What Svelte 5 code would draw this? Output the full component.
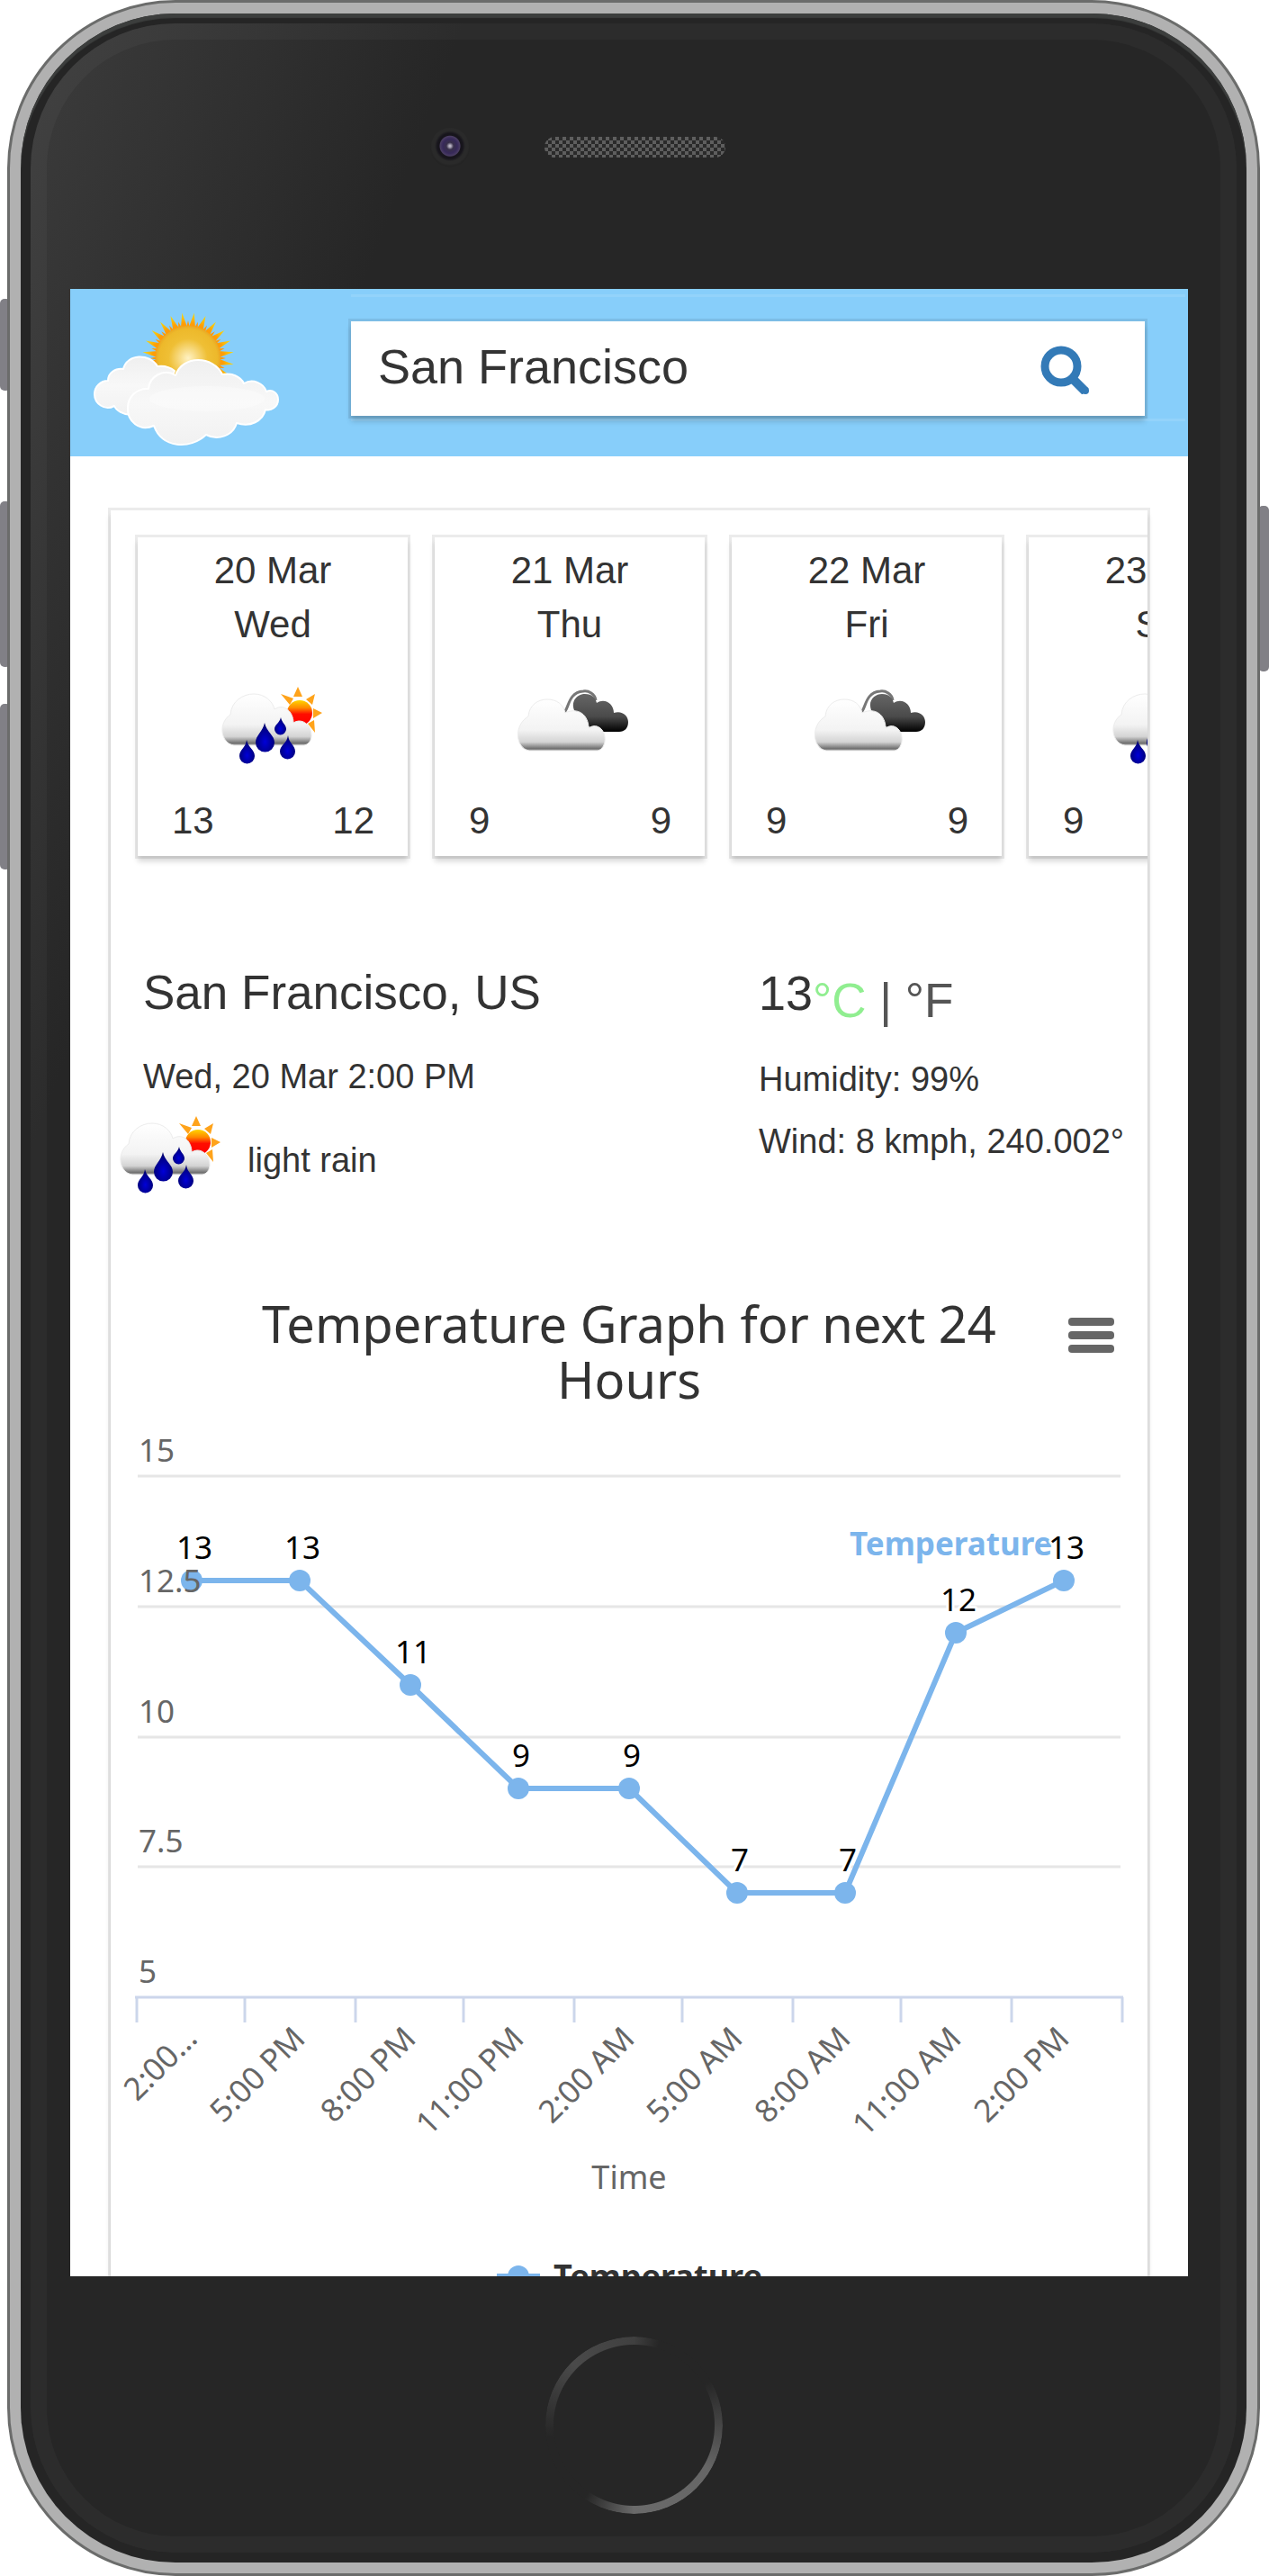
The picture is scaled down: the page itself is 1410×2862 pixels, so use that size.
<script>
  const days = [
    { date: '20 Mar', day: 'Wed', icon: 'rain', high: 13, low: 12 },
    { date: '21 Mar', day: 'Thu', icon: 'clouds', high: 9, low: 9 },
    { date: '22 Mar', day: 'Fri', icon: 'clouds', high: 9, low: 9 },
    { date: '23 Mar', day: 'Sat', icon: 'rain', high: 9, low: 9 }
  ];

  const readings = [
    { time: '2:00…', value: 13 },
    { time: '5:00 PM', value: 13 },
    { time: '8:00 PM', value: 11 },
    { time: '11:00 PM', value: 9 },
    { time: '2:00 AM', value: 9 },
    { time: '5:00 AM', value: 7 },
    { time: '8:00 AM', value: 7 },
    { time: '11:00 AM', value: 12 },
    { time: '2:00 PM', value: 13 }
  ];

  const plot = { left: 29, right: 1124, top: 77, bottom: 656 };
  const step = (plot.right - plot.left) / readings.length;
  // Points and ticks snap to the chart's 3px grid
  const snap = (n) => 3 * Math.floor(n / 3);
  const px = (i) => snap(91 + 121.3 * i);
  const py = (v) => Math.round(plot.bottom - ((v - 5) / 10) * (plot.bottom - plot.top));
  const gridValues = [15, 12.5, 10, 7.5, 5];
  const line = readings.map((r, i) => `${px(i)},${py(r.value)}`).join(' ');
  const ticks = Array.from({ length: readings.length + 1 }, (_, i) => plot.left + snap(step * i));

  // Sun rays of the logo: long yellow spikes with short orange ones between them
  const ray = (angle, half, r0, r1) => {
    const at = (a, r) => `${(109 + r * Math.sin(a)).toFixed(1)},${(58 - r * Math.cos(a)).toFixed(1)}`;
    return `${at(angle - half, r0)} ${at(angle, r1)} ${at(angle + half, r0)}`;
  };
  const longRays = Array.from({ length: 24 }, (_, i) => ray(((i + 0.5) * Math.PI) / 12, 0.11, 34, 51));
  const shortRays = Array.from({ length: 48 }, (_, i) => ray((i * Math.PI) / 24, 0.07, 33, 42));

  let city = 'San Francisco';
</script>

{#snippet weatherIcon(kind, label)}
  <svg class="weather" viewBox="9 36 132 92" role="img" aria-label={label}>
    <defs>
      <linearGradient id="cloud" x1="0" y1="0" x2="0" y2="1">
        <stop offset="0" stop-color="#ffffff" />
        <stop offset="0.6" stop-color="#f3f3f3" />
        <stop offset="0.83" stop-color="#d4d4d4" />
        <stop offset="0.96" stop-color="#707070" />
        <stop offset="1" stop-color="#a8a8a8" />
      </linearGradient>
      <linearGradient id="dark" x1="0" y1="0" x2="0" y2="1">
        <stop offset="0" stop-color="#666" />
        <stop offset="0.6" stop-color="#4a4a4a" />
        <stop offset="1" stop-color="#000" />
      </linearGradient>
      <linearGradient id="sunball" x1="0" y1="0" x2="0" y2="1">
        <stop offset="0" stop-color="#ffd500" />
        <stop offset="0.3" stop-color="#ff8a00" />
        <stop offset="0.55" stop-color="#ff0d00" />
        <stop offset="1" stop-color="#ff0000" />
      </linearGradient>
      <radialGradient id="drop" cx="0.5" cy="0.65" r="0.6">
        <stop offset="0" stop-color="#0000d8" />
        <stop offset="1" stop-color="#00006a" />
      </radialGradient>
    </defs>
    {#if kind === 'rain'}
      <g fill="#ffa31a">
        <path d="M98 51 L103 40 L108 51 Z M112 54 L122 48 L119 60 Z M120 64 L130 69 L120 75 Z M114 81 L122 91 L121 77 Z M94 60 L84 48 L98 53 Z" />
      </g>
      <circle cx="105" cy="69" r="14" fill="url(#sunball)" />
      <path d="M32 105 C17 103 14 80 28 71 C29 56 42 48 54 48 C66 48 75 56 77 65 C88 58 98 68 98 80 C106 75 114 80 117 88 C120 97 116 104 110 105 Z" fill="url(#cloud)" stroke="#ececec" stroke-width="1" />
      <g fill="url(#drop)">
        <path d="M66 80 C68 90 77 94 77 102 A10 10 0 0 1 56 102 C56 94 64 90 66 80 Z" />
        <path d="M84 74 C85 80 90 82 90 87 A6 6 0 0 1 77 87 C77 82 83 80 84 74 Z" />
        <path d="M92 94 C93 103 100 105 100 112 A8 8 0 0 1 83 112 C83 105 91 103 92 94 Z" />
        <path d="M46 99 C48 108 55 110 55 117 A8 8 0 0 1 38 117 C38 110 45 108 46 99 Z" />
      </g>
    {:else}
      <path d="M69 68 C74 65 73 46 90 45 C96 44 103 48 104 55" fill="none" stroke="#777" stroke-width="3" />
      <path d="M80 66 C76 55 84 48 92 48 C100 48 104 53 105 58 C114 52 124 59 124 69 C133 66 140 72 140 79 C140 86 136 90 130 90 H108 C98 90 92 78 80 66 Z" fill="url(#dark)" />
      <path d="M30 111 C14 108 13 82 29 73 C30 60 40 54 50 54 C61 54 68 60 70 69 C85 62 96 72 96 86 C104 80 113 86 114 96 C115 104 111 110 106 111 Z" fill="url(#cloud)" stroke="#ececec" stroke-width="1" />
    {/if}
  </svg>
{/snippet}

<div class="stage">
  <span class="key mute"></span>
  <span class="key up"></span>
  <span class="key down"></span>
  <span class="key power"></span>
  <div class="frame">
    <div class="rim">
      <div class="face">
        <div class="bezel">
          <span class="camera"></span>
          <span class="speaker"></span>
        </div>

        <div class="screen">
          <header>
            <svg class="logo" viewBox="0 0 215 160" role="img" aria-label="Weather">
              <defs>
                <radialGradient id="disc">
                  <stop offset="0" stop-color="#fff2c4" />
                  <stop offset="0.6" stop-color="#efbf35" />
                  <stop offset="0.9" stop-color="#edb92b" />
                  <stop offset="1" stop-color="#e9a825" />
                </radialGradient>
                <radialGradient id="spike" gradientUnits="userSpaceOnUse" cx="109" cy="58" r="51">
                  <stop offset="0.75" stop-color="#ff9f05" />
                  <stop offset="1" stop-color="#f5dc10" />
                </radialGradient>
                <linearGradient id="puff" x1="0" y1="0" x2="0" y2="1">
                  <stop offset="0" stop-color="#efefef" />
                  <stop offset="0.5" stop-color="#f8f8f8" />
                  <stop offset="1" stop-color="#f1f1f1" />
                </linearGradient>
              </defs>
              {#each longRays as points}
                <polygon {points} fill="url(#spike)" />
              {/each}
              {#each shortRays as points}
                <polygon {points} fill="#ff9a0a" />
              {/each}
              <circle cx="109" cy="58" r="36" fill="url(#disc)" />
              <g fill="url(#puff)" stroke="#fff" stroke-width="2" stroke-linejoin="round">
                <path d="M27 111 C16 117 5 108 5 98 C5 89 12 83 20 83 C20 74 28 69 37 70 C41 53 66 52 75 67 C82 66 89 68 94 72 L80 110 L46 121 C37 121 29 116 27 111 Z" />
                <path d="M71 133 C55 140 41 128 42 113 C42 100 53 91 65 92 C66 78 82 69 95 77 C103 54 137 55 147 76 C157 74 167 78 171 86 C181 80 193 86 196 95 C203 92 209 97 209 104 C209 112 201 117 195 115 C192 128 178 135 163 130 C159 144 142 150 129 143 C111 160 80 158 71 133 Z" />
              </g>
              <ellipse cx="130" cy="103" rx="64" ry="14" fill="#fff" opacity="0.3" />
            </svg>
            <div class="nav">
              <form class="search" on:submit|preventDefault>
                <input type="text" aria-label="City" bind:value={city} />
                <button type="submit" aria-label="Search">
                  <svg viewBox="0 0 56 56" width="56" height="56">
                    <circle cx="23" cy="25" r="18" fill="none" stroke="#337ab7" stroke-width="9" />
                    <path d="M36 39 L50 53" stroke="#337ab7" stroke-width="10" />
                    <circle cx="50" cy="52" r="4" fill="#337ab7" />
                  </svg>
                </button>
              </form>
            </div>
          </header>

          <main>
            <section class="forecast">
              {#each days as d}
                <article>
                  <p>{d.date}</p>
                  <p>{d.day}</p>
                  {@render weatherIcon(d.icon, d.icon)}
                  <div class="range"><span>{d.high}</span><span>{d.low}</span></div>
                </article>
              {/each}
            </section>

            <section class="current">
              <div>
                <h1>San Francisco, US</h1>
                <p class="when">Wed, 20 Mar 2:00 PM</p>
                <div class="sky">
                  {@render weatherIcon('rain', 'light rain')}
                  <span>light rain</span>
                </div>
              </div>
              <div>
                <div class="temp">
                  <span class="value">13</span>
                  <div class="units">
                    <button type="button" class="on">°C</button>&nbsp;|&nbsp;<button type="button">°F</button>
                  </div>
                </div>
                <p class="humidity">Humidity: 99%</p>
                <p class="wind">Wind: 8 kmph, 240.002°</p>
              </div>
            </section>

            <section class="chart">
              <div class="chart-head">
                <h2>Temperature Graph for next 24 Hours</h2>
                <button type="button" aria-label="Chart menu"><i></i><i></i><i></i></button>
              </div>
              <svg class="plot" viewBox="0 0 1152 1000" role="img" aria-label="Temperature for the next 24 hours">
                {#each gridValues.slice(0, 4) as v}
                  <line x1="30" x2="1122" y1={py(v)} y2={py(v)} stroke="#e6e6e6" stroke-width="3" />
                {/each}
                <line x1="27" x2="1125" y1={plot.bottom} y2={plot.bottom} stroke="#ccd6eb" stroke-width="3" />
                {#each ticks as x}
                  <line x1={x} x2={x} y1={plot.bottom} y2={plot.bottom + 28} stroke="#ccd6eb" stroke-width="3" />
                {/each}
                <polyline points={line} fill="none" stroke="#7cb5ec" stroke-width="6" stroke-linejoin="round" />
                {#each readings as r, i}
                  <circle cx={px(i)} cy={py(r.value)} r="12" fill="#7cb5ec" />
                {/each}
                <text class="series" x="821" y="165">Temperature</text>
                {#each readings as r, i}
                  <text class="point" x={px(i) + 3} y={py(r.value) - 24}>{r.value}</text>
                {/each}
                {#each gridValues as v}
                  <text class="axis" x="31" y={py(v) - 16}>{v}</text>
                {/each}
                {#each readings as r, i}
                  <text class="axis time" transform={`translate(${px(i) + 8} 704) rotate(-45)`}>{r.time}</text>
                {/each}
                <text class="name" x="576" y="869">Time</text>
                <line x1="429" x2="477" y1="966" y2="966" stroke="#7cb5ec" stroke-width="6" />
                <circle cx="453" cy="966" r="12" fill="#7cb5ec" />
                <text class="legend" x="492" y="979">Temperature</text>
              </svg>
            </section>
          </main>
        </div>

        <div class="chin">
          <button class="home" type="button" aria-label="Home"></button>
        </div>
      </div>
    </div>
  </div>
</div>

<style>
  :global(body) {
    background: #fff;
  }
  .stage, .stage * {
    box-sizing: border-box;
  }
  .stage {
    position: relative;
    height: 100vh;
    padding: 0 10px 0 8px;
    font-family: "Liberation Sans", Arial, sans-serif;
    color: #333;
  }
  p, h1, h2 {
    margin: 0;
    font-weight: 400;
  }
  button {
    border: 0;
    padding: 0;
    background: none;
    font: inherit;
    color: inherit;
    cursor: pointer;
  }
  .key {
    position: absolute;
    left: 0;
    width: 12px;
    height: 184px;
    border-radius: 5px;
    background: #818086;
  }
  .mute { top: 332px; height: 102px; }
  .up { top: 557px; }
  .down { top: 782px; }
  .power { top: 562px; left: auto; right: 0; }

  .frame {
    position: relative;
    height: 100%;
    border: 3px solid #6b6c6b;
    border-radius: 187px;
    background: #b1b1b1;
    padding: 12px;
  }
  .rim {
    height: 100%;
    padding: 11px;
    border-radius: 172px;
    background: #252525;
    box-shadow: inset 0 5px 1px #3c3e3d;
  }
  .face {
    display: grid;
    grid-template-rows: 295px minmax(0, 1fr) 307px;
    height: 100%;
    padding: 0 54px 0 44px;
    border-radius: 161px;
    background: linear-gradient(111deg, #3c3c3c 0, #262626 450px);
    box-shadow: inset 0 0 0 18px rgba(255, 255, 255, 0.03);
  }
  .bezel {
    display: grid;
    grid-template-columns: 1fr 201px 1fr;
    column-gap: 83px;
    align-items: center;
    padding: 0 0 20px 12px;
  }
  .camera {
    justify-self: end;
    width: 44px;
    height: 44px;
    border-radius: 50%;
    background: radial-gradient(circle at 50% 46%, #b9b4c4 0 1px, #38304a 4px, #37295a 8px, #4a3d62 11px, #17151c 12px 14px, #2a2a2a 17px 20px, #242424 22px);
  }
  .speaker {
    height: 23px;
    border-radius: 12px;
    background: repeating-conic-gradient(#5e5e5e 0 25%, #2a2a2a 0 50%) 0 0 / 8px 8px;
  }
  .screen {
    overflow: hidden;
    background: #fff;
  }
  .chin {
    display: flex;
    align-items: center;
    justify-content: center;
    padding: 24px 0 0 10px;
  }
  .home {
    width: 197px;
    height: 197px;
    border-radius: 50%;
    background: conic-gradient(#404040 0, #262626 17deg, #262626 60deg, #666 120deg, #6a6a6a 180deg, #262626 214deg, #262626 262deg, #4a4a4a 315deg, #404040 360deg);
    -webkit-mask: radial-gradient(circle, transparent 89px, #000 90px);
    mask: radial-gradient(circle, transparent 89px, #000 90px);
  }

  header {
    display: flex;
    align-items: flex-start;
    padding: 6px 3px 0;
    background: #87cefa;
  }
  .logo {
    flex: none;
    width: 215px;
    height: 160px;
    margin: 13px 75px 7px 19px;
  }
  .nav {
    flex: 1;
    min-width: 0;
    padding: 27px 45px 3px 0;
    border: solid rgba(255, 255, 255, 0.1);
    border-width: 3px 0;
  }
  .search {
    display: flex;
    height: 105px;
    background: #fff;
    box-shadow: 0 0 0 3px rgba(0, 0, 0, 0.08), 0 6px 6px rgba(0, 0, 0, 0.18);
  }
  .search input {
    flex: 1;
    min-width: 0;
    border: 0;
    outline: 0;
    padding: 0 0 6px 30px;
    background: none;
    font: inherit;
    font-size: 54px;
    color: #333;
  }
  .search button {
    display: flex;
    align-items: center;
    padding: 0 60px;
  }

  main {
    margin: 60px 45px;
    overflow: clip;
    overflow-clip-margin: 12px;
    box-shadow: 0 0 0 3px rgba(0, 0, 0, 0.08), 0 6px 6px rgba(0, 0, 0, 0.16);
  }
  .forecast {
    display: flex;
    gap: 30px;
    padding: 30px;
    overflow: hidden;
    font-size: 42px;
    line-height: 60px;
    text-align: center;
  }
  article {
    flex: 0 0 300px;
    padding: 7px 0 9px;
    box-shadow: 0 0 0 3px rgba(0, 0, 0, 0.08), 0 6px 6px rgba(0, 0, 0, 0.16);
  }
  .weather {
    display: block;
    flex: none;
    width: 132px;
    height: 92px;
  }
  article .weather {
    margin: 35px auto 31px;
  }
  .range {
    display: flex;
    justify-content: space-between;
    padding: 0 37px 0 38px;
  }

  .current {
    display: grid;
    grid-template-columns: 19fr 12fr;
    padding: 92px 0 0 36px;
    font-size: 38px;
    line-height: 42px;
    white-space: nowrap;
  }
  h1 {
    font-size: 53px;
    line-height: 60px;
  }
  .when {
    margin-top: 42px;
  }
  .sky {
    display: flex;
    align-items: center;
    gap: 19px;
    margin: 19px 0 0 -35px;
  }
  .sky span {
    padding-top: 14px;
  }
  .temp {
    display: flex;
    font-size: 54px;
    line-height: 60px;
  }
  .units {
    padding-top: 9px;
    font-size: 53px;
    color: #555;
  }
  .units .on {
    color: #90ee90;
  }
  .humidity {
    margin-top: 36px;
  }
  .wind {
    margin-top: 27px;
  }

  .chart {
    padding-top: 111px;
    font-family: "Noto Sans", "Open Sans", sans-serif;
  }
  .chart-head {
    display: grid;
    grid-template-columns: 150px 1fr 150px;
    align-items: start;
  }
  h2 {
    grid-column: 2;
    font-size: 56px;
    line-height: 62px;
    text-align: center;
  }
  .chart-head button {
    display: grid;
    gap: 6px;
    justify-self: end;
    width: 51px;
    margin: 25px 37px 0 0;
  }
  .chart-head i {
    height: 9px;
    border-radius: 4px;
    background: #666;
  }
  .plot {
    display: block;
    width: 100%;
  }
  .point, .series {
    font-size: 35px;
    paint-order: stroke;
    stroke: #fff;
    stroke-width: 6px;
    stroke-linejoin: round;
  }
  .point {
    fill: #000;
    text-anchor: middle;
  }
  .series {
    font-weight: 700;
    fill: #7cb5ec;
  }
  .axis {
    font-size: 35px;
    fill: #666;
  }
  .time {
    text-anchor: end;
  }
  .name {
    font-size: 36px;
    fill: #666;
    text-anchor: middle;
  }
  .legend {
    font-size: 36px;
    font-weight: 700;
    fill: #333;
  }
</style>
